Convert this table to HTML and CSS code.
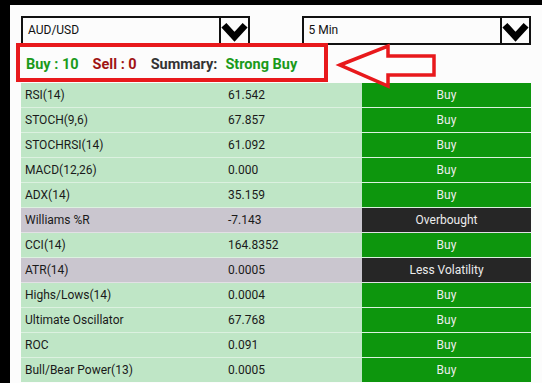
FILE: index.html
```html
<!DOCTYPE html>
<html>
<head>
<meta charset="utf-8">
<link rel="stylesheet" href="styles.css">
</head>
<body>
<div class="screen">
  <div class="selects">
    <div class="select sel-pair">
      <span class="sel-text">AUD/USD</span>
      <span class="sel-arrow"><svg width="28" height="27" viewBox="0 0 28 27"><polyline points="3,8 14,20 25,8" fill="none" stroke="#000" stroke-width="7" stroke-linejoin="miter" stroke-miterlimit="10"/></svg></span>
    </div>
    <div class="select sel-time">
      <span class="sel-text">5 Min</span>
      <span class="sel-arrow"><svg width="28" height="27" viewBox="0 0 28 27"><polyline points="3,8 14,20 25,8" fill="none" stroke="#000" stroke-width="7" stroke-linejoin="miter" stroke-miterlimit="10"/></svg></span>
    </div>
  </div>
  <div class="summary">
    <span class="s-buy">Buy : 10</span>
    <span class="s-sell">Sell : 0</span>
    <span class="s-label">Summary:</span>
    <span class="s-buy">Strong Buy</span>
  </div>
  <div class="table">
    <div class="row"><span class="name">RSI(14)</span><span class="val">61.542</span><span class="act buy">Buy</span></div>
    <div class="row"><span class="name">STOCH(9,6)</span><span class="val">67.857</span><span class="act buy">Buy</span></div>
    <div class="row"><span class="name">STOCHRSI(14)</span><span class="val">61.092</span><span class="act buy">Buy</span></div>
    <div class="row"><span class="name">MACD(12,26)</span><span class="val">0.000</span><span class="act buy">Buy</span></div>
    <div class="row"><span class="name">ADX(14)</span><span class="val">35.159</span><span class="act buy">Buy</span></div>
    <div class="row neutral"><span class="name">Williams %R</span><span class="val">-7.143</span><span class="act dark">Overbought</span></div>
    <div class="row"><span class="name">CCI(14)</span><span class="val">164.8352</span><span class="act buy">Buy</span></div>
    <div class="row neutral"><span class="name">ATR(14)</span><span class="val">0.0005</span><span class="act dark">Less Volatility</span></div>
    <div class="row"><span class="name">Highs/Lows(14)</span><span class="val">0.0004</span><span class="act buy">Buy</span></div>
    <div class="row"><span class="name">Ultimate Oscillator</span><span class="val">67.768</span><span class="act buy">Buy</span></div>
    <div class="row"><span class="name">ROC</span><span class="val">0.091</span><span class="act buy">Buy</span></div>
    <div class="row"><span class="name">Bull/Bear Power(13)</span><span class="val">0.0005</span><span class="act buy">Buy</span></div>
  </div>
</div>
<div class="highlight-box"></div>
<svg class="callout-arrow" width="542" height="383" viewBox="0 0 542 383">
  <polygon points="340,65 388,46 388,56 434,56 434,75 388,75 388,86" fill="#fdfdfd" stroke="#e8191c" stroke-width="3.5" stroke-linejoin="miter"/>
</svg>
</body>
</html>
```
FILE: styles.css
```css
html, body {
  margin: 0;
  padding: 0;
  background: #000;
  width: 542px;
  height: 383px;
  overflow: hidden;
  font-family: Roboto, "Liberation Sans", sans-serif;
}
.screen {
  margin: 5px 0 0 10px;
  height: 378px;
  background: #fcfcfc;
  padding: 11px 11px 0 11px;
  box-sizing: border-box;
}
.selects {
  display: flex;
  gap: 52px;
  height: 29px;
}
.select {
  display: flex;
  border: 2px solid #111;
  box-sizing: border-box;
  height: 29px;
  background: #fcfcfc;
}
.sel-pair { width: 229px; }
.sel-time { width: 230px; }
.sel-text {
  flex: 1;
  font-size: 12px;
  color: #111;
  padding-left: 5px;
  line-height: 25px;
}
.sel-arrow {
  width: 27px;
  border-left: 2px solid #111;
  display: flex;
  align-items: center;
  justify-content: center;
}
.summary {
  height: 38px;
  display: flex;
  align-items: center;
  padding-left: 5px;
  font-size: 14.5px;
  font-weight: bold;
  box-sizing: border-box;
  padding-top: 1px;
}
.summary span { margin-right: 14px; }
.s-buy { color: #1a9a1a; }
.s-sell { color: #a01414; }
.s-label { color: #333; margin-right: 8px !important; }
.table {
  width: 510px;
}
.row {
  display: grid;
  grid-template-columns: 204px 137px 169px;
  height: 24px;
  border-bottom: 1px solid rgba(255,255,255,0.45);
  background: #bfe6c6;
  font-size: 12px;
  line-height: 24px;
}
.row:last-child { border-bottom: none; }
.row.neutral { background: #cac6cf; }
.name { padding-left: 4px; color: #1a1a1a; }
.val { padding-left: 3px; color: #1a1a1a; white-space: nowrap; }
.act { text-align: center; color: #ececec; }
.act.buy { background: #0d960d; }
.act.dark { background: #262626; }
.highlight-box {
  position: absolute;
  left: 16px;
  top: 43px;
  width: 312px;
  height: 39px;
  border: 4px solid #e8191c;
  box-sizing: border-box;
}
.callout-arrow {
  position: absolute;
  left: 0;
  top: 0;
  pointer-events: none;
}
```
